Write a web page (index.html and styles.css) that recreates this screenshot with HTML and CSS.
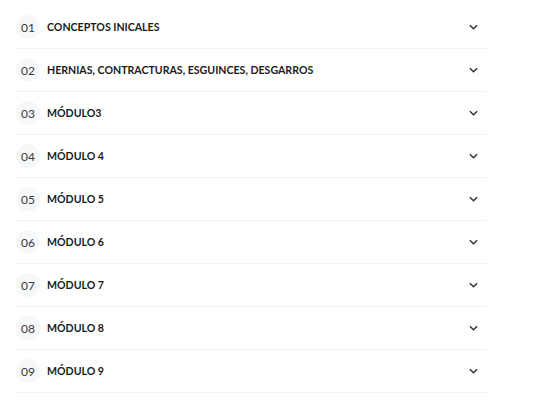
FILE: index.html
```html
<!DOCTYPE html>
<html lang="es">
<head>
    <meta charset="UTF-8">
    <meta name="viewport" content="width=device-width, initial-scale=1.0">
    <title>Módulos del curso</title>
    <link rel="stylesheet" href="styles.css">
</head>
<body>
    <div class="modules">
        <div class="module">
            <span class="num">01</span>
            <span class="title">CONCEPTOS INICALES</span>
            <svg class="chevron" viewBox="0 0 10 6"><path d="M1 1l4 4 4-4"/></svg>
        </div>
        <div class="module">
            <span class="num">02</span>
            <span class="title">HERNIAS, CONTRACTURAS, ESGUINCES, DESGARROS</span>
            <svg class="chevron" viewBox="0 0 10 6"><path d="M1 1l4 4 4-4"/></svg>
        </div>
        <div class="module">
            <span class="num">03</span>
            <span class="title">MÓDULO3</span>
            <svg class="chevron" viewBox="0 0 10 6"><path d="M1 1l4 4 4-4"/></svg>
        </div>
        <div class="module">
            <span class="num">04</span>
            <span class="title">MÓDULO 4</span>
            <svg class="chevron" viewBox="0 0 10 6"><path d="M1 1l4 4 4-4"/></svg>
        </div>
        <div class="module">
            <span class="num">05</span>
            <span class="title">MÓDULO 5</span>
            <svg class="chevron" viewBox="0 0 10 6"><path d="M1 1l4 4 4-4"/></svg>
        </div>
        <div class="module">
            <span class="num">06</span>
            <span class="title">MÓDULO 6</span>
            <svg class="chevron" viewBox="0 0 10 6"><path d="M1 1l4 4 4-4"/></svg>
        </div>
        <div class="module">
            <span class="num">07</span>
            <span class="title">MÓDULO 7</span>
            <svg class="chevron" viewBox="0 0 10 6"><path d="M1 1l4 4 4-4"/></svg>
        </div>
        <div class="module">
            <span class="num">08</span>
            <span class="title">MÓDULO 8</span>
            <svg class="chevron" viewBox="0 0 10 6"><path d="M1 1l4 4 4-4"/></svg>
        </div>
        <div class="module">
            <span class="num">09</span>
            <span class="title">MÓDULO 9</span>
            <svg class="chevron" viewBox="0 0 10 6"><path d="M1 1l4 4 4-4"/></svg>
        </div>
    </div>
</body>
</html>
```
FILE: styles.css
```css
body {
    font-family: Lato, "Noto Sans", sans-serif;
    background-color: #fff;
    margin: 0;
    padding: 6px 0 0 16px;
}
.modules {
    width: 470px;
}
.module {
    display: flex;
    align-items: center;
    padding: 9px 0;
    border-bottom: 1px solid #f1f1f3;
}
.num {
    width: 24px;
    height: 24px;
    border-radius: 50%;
    background-color: #f6f7f9;
    display: flex;
    align-items: center;
    justify-content: center;
    font-size: 12px;
    color: #3a3a3a;
}
.title {
    flex: 1;
    margin-left: 7px;
    font-size: 10.6px;
    font-weight: bold;
    color: #1a1a1a;
}
.chevron {
    width: 9px;
    height: 6px;
    margin-right: 8px;
    fill: none;
    stroke: #333;
    stroke-width: 1.6;
}
```
